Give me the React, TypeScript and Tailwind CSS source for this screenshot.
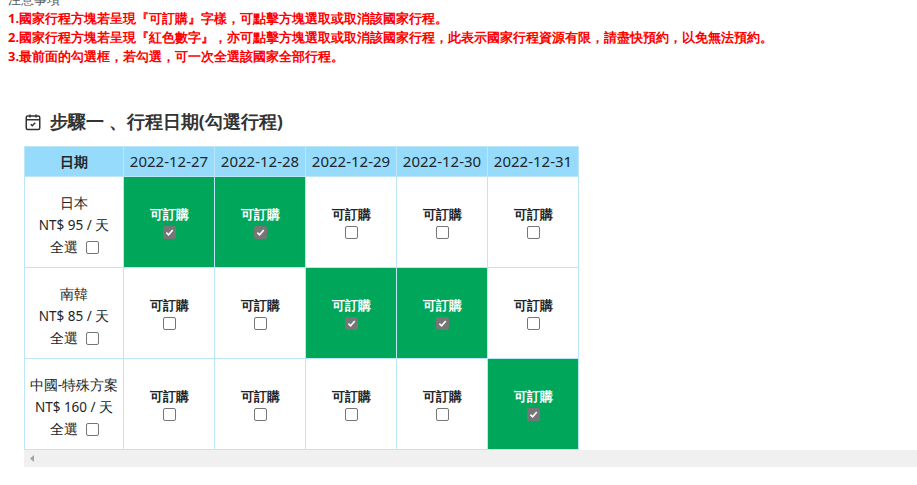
import { useState } from 'react';

const dates = ['2022-12-27', '2022-12-28', '2022-12-29', '2022-12-30', '2022-12-31'];
const rows = [
    { name: '日本', price: 'NT$ 95 / 天', sel: [true, true, false, false, false] },
    { name: '南韓', price: 'NT$ 85 / 天', sel: [false, false, true, true, false] },
    { name: '中國-特殊方案', price: 'NT$ 160 / 天', sel: [false, false, false, false, true] },
];

function Box({ checked }: { checked: boolean }) {
    return checked ? (
        <span className="inline-flex w-[13px] h-[13px] rounded-[2px] bg-[#767676] items-center justify-center">
            <svg width="9" height="9" viewBox="0 0 10 10">
                <path d="M1.5 5.2 L4 7.6 L8.6 2.2" stroke="white" strokeWidth="1.8" fill="none" />
            </svg>
        </span>
    ) : (
        <span className="inline-block w-[13px] h-[13px] rounded-[2px] border border-[#767676] bg-white" />
    );
}

export default function App() {
    const [data, setData] = useState(rows);
    function toggle(r: number, c: number) {
        setData(data.map((row, i) => (i === r ? { ...row, sel: row.sel.map((s, j) => (j === c ? !s : s)) } : row)));
    }
    return (
        <div className="w-[917px] h-[485px] overflow-hidden bg-white font-['Noto_Sans_CJK_TC',sans-serif] text-[#212529]">
            <div className="mt-[-10px] pl-2 text-[13px] leading-[19px]">
                <div className="text-[#555]">注意事項</div>
                <div className="text-[#ff0000] font-bold">1.國家行程方塊若呈現『可訂購』字樣，可點擊方塊選取或取消該國家行程。</div>
                <div className="text-[#ff0000] font-bold">2.國家行程方塊若呈現『紅色數字』，亦可點擊方塊選取或取消該國家行程，此表示國家行程資源有限，請盡快預約，以免無法預約。</div>
                <div className="text-[#ff0000] font-bold">3.最前面的勾選框，若勾選，可一次全選該國家全部行程。</div>
            </div>
            <div className="mt-[42px] ml-6 flex items-center gap-2 text-[18px] font-bold text-[#333]">
                <svg width="18" height="18" viewBox="0 0 24 24" fill="none" stroke="#333" strokeWidth="2">
                    <rect x="3" y="4" width="18" height="18" rx="2" />
                    <path d="M8 2v4M16 2v4M3 9h18M9 15l2 2 4-4" />
                </svg>
                <span>步驟一 、行程日期(勾選行程)</span>
            </div>
            <div className="ml-6 mt-[11px]">
                <table className="border-collapse text-[14px]">
                    <thead>
                        <tr className="bg-[#96dbfb] h-[30px]">
                            <th className="w-[99px] border border-[#bde6f7] font-bold">日期</th>
                            {dates.map((d) => (
                                <th key={d} className="w-[91px] border border-[#bde6f7] font-normal text-[15px]">{d}</th>
                            ))}
                        </tr>
                    </thead>
                    <tbody>
                        {data.map((row, r) => (
                            <tr key={row.name} className="h-[91px]">
                                <td className="border border-[#bde6f7] text-center text-[13.5px] leading-[22px] pt-[6px]">
                                    <div>{row.name}</div>
                                    <div>{row.price}</div>
                                    <div className="flex items-center justify-center gap-2">全選 <Box checked={false} /></div>
                                </td>
                                {row.sel.map((s, c) => (
                                    <td
                                        key={c}
                                        onClick={() => toggle(r, c)}
                                        className={`border border-[#bde6f7] text-center text-[13px] font-bold cursor-pointer ${s ? 'bg-[#00a65a] text-white' : ''}`}
                                    >
                                        <div>可訂購</div>
                                        <div className="flex justify-center mt-[2px]"><Box checked={s} /></div>
                                    </td>
                                ))}
                            </tr>
                        ))}
                    </tbody>
                </table>
                <div className="h-[17px] bg-[#f0f0f0] flex items-center pl-[6px]">
                    <svg width="4" height="7" viewBox="0 0 4 7"><path d="M4 0 L0 3.5 L4 7 Z" fill="#a3a3a3" /></svg>
                </div>
            </div>
        </div>
    );
}
